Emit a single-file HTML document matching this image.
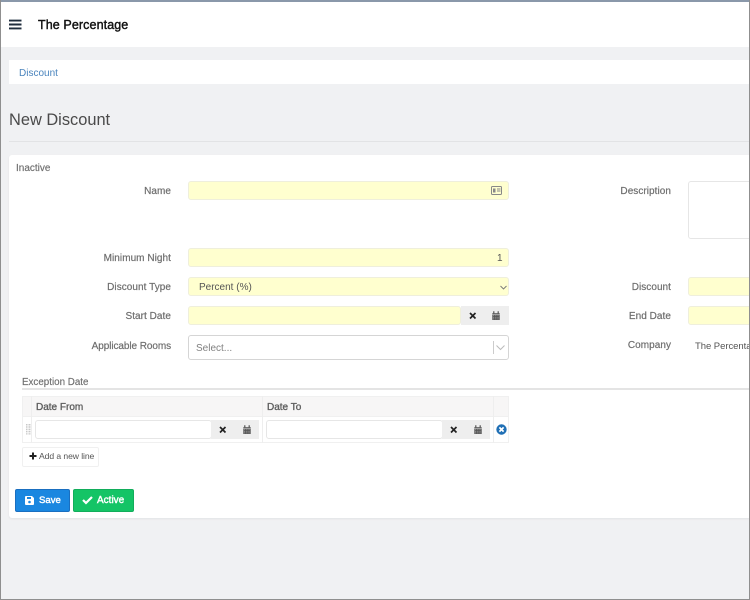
<!DOCTYPE html>
<html><head><meta charset="utf-8"><style>
*{box-sizing:border-box}
html,body{margin:0;padding:0}
body{width:750px;height:600px;overflow:hidden;position:relative;background:#f0f1f3;font-family:"Liberation Sans",sans-serif;font-size:10px;color:#5f5f5f}
.a{position:absolute}
.l{position:absolute;text-align:right;width:160px;left:11px;font-weight:400;letter-spacing:.05px;-webkit-text-stroke:.2px #6e6e6e;color:#6e6e6e;line-height:12px}
.r{left:511px}
.y{position:absolute;background:#ffffcf;border:1px solid #efefdc;border-radius:3px;height:19px}
.w{position:absolute;background:#fff;border:1px solid #e6e6e6;border-radius:3px}
.g{position:absolute;background:#eeeeee}
.t{position:absolute;white-space:nowrap;line-height:12px}
</style></head><body>
<div class="a" style="left:0;top:0;width:750px;height:47px;background:#fff"></div>
<svg class="a" style="left:9px;top:19px" width="13" height="11"><path d="M0 1.6H12.5M0 5.5H12.5M0 9.4H12.5" stroke="#1f2d3d" stroke-width="1.9"/></svg>
<div class="t" style="left:38px;top:18px;font-size:12.5px;line-height:15px;color:#111;letter-spacing:.1px;-webkit-text-stroke:.4px #111">The Percentage</div>
<div class="a" style="left:9px;top:60px;width:741px;height:24px;background:#fff"></div>
<div class="t" style="left:19px;top:68px;color:#4a84bd">Discount</div>
<div class="t" style="left:9px;top:110px;font-size:16.4px;line-height:20px;color:#4a4a4a">New Discount</div>
<div class="a" style="left:9px;top:141px;width:741px;height:1px;background:#e2e3e5"></div>
<div class="a" style="left:9px;top:155px;width:741px;height:363px;background:#fff;border-radius:3px 0 0 3px;box-shadow:0 1px 2px rgba(0,0,0,.06)"></div>

<div class="t" style="left:16px;top:163px;color:#6e6e6e;-webkit-text-stroke:.15px #6e6e6e">Inactive</div>

<div class="l" style="top:186px">Name</div>
<div class="y" style="left:188px;top:181px;width:321px"></div>
<svg class="a" style="left:491px;top:186px" width="11" height="9"><rect x=".5" y=".5" width="10" height="8" rx="1" fill="none" stroke="#888"/><path d="M2 2.5h2.5v4H2z" fill="#888"/><path d="M6 3h3.5M6 5h3.5" stroke="#888" fill="none" stroke-width=".9"/></svg>

<div class="l" style="top:253px">Minimum Night</div>
<div class="y" style="left:188px;top:248px;width:321px"></div>
<div class="t" style="left:497px;top:253px;color:#555">1</div>

<div class="l" style="top:282px">Discount Type</div>
<div class="y" style="left:188px;top:277px;width:321px"></div>
<div class="t" style="left:199px;top:282px;color:#555">Percent (%)</div>
<svg class="a" style="left:500px;top:285px" width="7" height="5"><path d="M.5 1L3.5 4L6.5 1" fill="none" stroke="#777" stroke-width=".9"/></svg>

<div class="l" style="top:311px">Start Date</div>
<div class="y" style="left:188px;top:306px;width:273px"></div>
<div class="g" style="left:461px;top:306px;width:48px;height:19px"></div>
<svg class="a" style="left:469px;top:312px" width="8" height="8"><path d="M1 1L6.5 6.5M6.5 1L1 6.5" stroke="#222" stroke-width="1.7"/></svg>
<svg class="a" style="left:492px;top:311px" width="8" height="9"><path d="M.3 2.2H7.7V9H.3z" fill="#555"/><path d="M1.8 0.3V2.4M6.2 0.3V2.4" stroke="#555" stroke-width="1.2"/><path d="M.3 3.5h7.4" stroke="#eee" stroke-width=".5"/><path d="M1 4.5h6M1 6.2h6M1 7.9h6" stroke="#bbb" stroke-width=".6" stroke-dasharray="1 .8"/></svg>

<div class="l" style="top:341px;letter-spacing:-.08px">Applicable Rooms</div>
<div class="a" style="left:188px;top:335px;width:321px;height:25px;background:#fff;border:1px solid #d5d5d5;border-radius:3px"></div>
<div class="t" style="left:196px;top:343px;color:#808080">Select...</div>
<div class="a" style="left:493px;top:341px;width:1px;height:13px;background:#ccc"></div>
<svg class="a" style="left:496px;top:345px" width="9" height="6"><path d="M.5 .5L4.5 4.5L8.5 .5" fill="none" stroke="#bbb"/></svg>

<div class="l r" style="top:186px">Description</div>
<div class="w" style="left:688px;top:181px;width:70px;height:58px"></div>
<div class="l r" style="top:282px">Discount</div>
<div class="y" style="left:688px;top:277px;width:70px"></div>
<div class="l r" style="top:311px">End Date</div>
<div class="y" style="left:688px;top:306px;width:70px"></div>
<div class="l r" style="top:340px">Company</div>
<div class="t" style="left:695px;top:341px;font-size:9.5px;color:#555;letter-spacing:-.05px">The Percentage</div>

<div class="t" style="left:22px;top:377px;font-size:9.8px;color:#6e6e6e;-webkit-text-stroke:.15px #6e6e6e">Exception Date</div>
<div class="a" style="left:22px;top:388px;width:728px;height:2px;background:#e4e4e4"></div>

<div class="a" style="left:22px;top:396px;width:487px;height:47px;border:1px solid #f0f0f0"></div>
<div class="a" style="left:23px;top:397px;width:485px;height:19px;background:#f7f6f6"></div>
<div class="a" style="left:22px;top:416px;width:487px;height:1px;background:#f0f0f0"></div>
<div class="a" style="left:31px;top:396px;width:1px;height:47px;background:#eee"></div>
<div class="a" style="left:262px;top:396px;width:1px;height:47px;background:#eee"></div>
<div class="a" style="left:493px;top:396px;width:1px;height:47px;background:#eee"></div>
<div class="t" style="left:36px;top:402px;color:#5f5f5f;-webkit-text-stroke:.35px #5f5f5f">Date From</div>
<div class="t" style="left:267px;top:402px;color:#5f5f5f;-webkit-text-stroke:.35px #5f5f5f">Date To</div>

<svg class="a" style="left:26px;top:424px" width="5" height="11"><path d="M.5 0v10.5M3.5 0v10.5" stroke="#c8c8c8" stroke-width="2" stroke-dasharray="1.5 .8" fill="none"/></svg>

<div class="w" style="left:35px;top:420px;width:177px;height:19px"></div>
<div class="g" style="left:211px;top:420px;width:48px;height:19px"></div>
<svg class="a" style="left:219px;top:426px" width="8" height="8"><path d="M1 1L6.5 6.5M6.5 1L1 6.5" stroke="#222" stroke-width="1.7"/></svg>
<svg class="a" style="left:243px;top:425px" width="8" height="9"><path d="M.3 2.2H7.7V9H.3z" fill="#555"/><path d="M1.8 0.3V2.4M6.2 0.3V2.4" stroke="#555" stroke-width="1.2"/><path d="M.3 3.5h7.4" stroke="#eee" stroke-width=".5"/><path d="M1 4.5h6M1 6.2h6M1 7.9h6" stroke="#bbb" stroke-width=".6" stroke-dasharray="1 .8"/></svg>

<div class="w" style="left:266px;top:420px;width:177px;height:19px"></div>
<div class="g" style="left:442px;top:420px;width:48px;height:19px"></div>
<svg class="a" style="left:450px;top:426px" width="8" height="8"><path d="M1 1L6.5 6.5M6.5 1L1 6.5" stroke="#222" stroke-width="1.7"/></svg>
<svg class="a" style="left:474px;top:425px" width="8" height="9"><path d="M.3 2.2H7.7V9H.3z" fill="#555"/><path d="M1.8 0.3V2.4M6.2 0.3V2.4" stroke="#555" stroke-width="1.2"/><path d="M.3 3.5h7.4" stroke="#eee" stroke-width=".5"/><path d="M1 4.5h6M1 6.2h6M1 7.9h6" stroke="#bbb" stroke-width=".6" stroke-dasharray="1 .8"/></svg>
<svg class="a" style="left:496px;top:424px" width="11" height="11"><circle cx="5.5" cy="5.5" r="5.2" fill="#1f6fb5"/><path d="M3.4 3.4L7.6 7.6M7.6 3.4L3.4 7.6" stroke="#fff" stroke-width="1.7"/></svg>

<div class="a" style="left:22px;top:447px;width:77px;height:20px;background:#fff;border:1px solid #f0f0f0;border-radius:2px"></div>
<svg class="a" style="left:29px;top:452px" width="8" height="8"><path d="M4 .5V7.5M.5 4H7.5" stroke="#222" stroke-width="2"/></svg>
<div class="t" style="left:39px;top:450px;font-size:8.6px;color:#555;letter-spacing:-.08px">Add a new line</div>

<div class="a" style="left:15px;top:489px;width:55px;height:23px;background:#1a87e0;border:1px solid #1a6fc0;border-radius:2px"></div>
<svg class="a" style="left:25px;top:496px" width="9" height="9"><path d="M0 1Q0 0 1 0H7L9 2V8Q9 9 8 9H1Q0 9 0 8Z" fill="#fff"/><rect x="2" y="1" width="4" height="2" fill="#1a87e0"/><circle cx="4.5" cy="6" r="1.3" fill="#1a87e0"/></svg>
<div class="t" style="left:39px;top:495px;font-size:9.6px;color:#fff;-webkit-text-stroke:.4px #fff">Save</div>
<div class="a" style="left:73px;top:489px;width:61px;height:23px;background:#14c466;border:1px solid #12ad5b;border-radius:2px"></div>
<svg class="a" style="left:82px;top:495px" width="11" height="10"><path d="M1 5L4 8L10 2" fill="none" stroke="#fff" stroke-width="2.2"/></svg>
<div class="t" style="left:97px;top:495px;color:#fff;-webkit-text-stroke:.4px #fff">Active</div>

<div class="a" style="left:0;top:0;width:750px;height:2px;background:#8a98aa"></div>
<div class="a" style="left:0;top:0;width:1px;height:600px;background:#8f8f8f"></div>
<div class="a" style="left:749px;top:0;width:1px;height:600px;background:#8f8f8f"></div>
<div class="a" style="left:0;top:599px;width:750px;height:1px;background:#8f8f8f"></div>
</body></html>
